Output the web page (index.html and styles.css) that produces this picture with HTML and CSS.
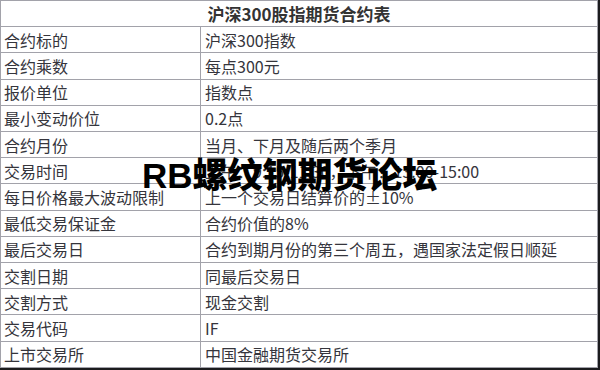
FILE: index.html
```html
<!DOCTYPE html>
<html>
	<head>
		<meta charset="utf-8">
		<title>沪深300股指期货合约表</title>
		<link rel="stylesheet" href="styles.css">
	</head>
	<body>
		<div class="frame">
			<table class="contract">
				<tr><th colspan="2">沪深300股指期货合约表</th></tr>
				<tr><td class="name">合约标的</td><td>沪深300指数</td></tr>
				<tr><td class="name">合约乘数</td><td>每点300元</td></tr>
				<tr><td class="name">报价单位</td><td>指数点</td></tr>
				<tr><td class="name">最小变动价位</td><td>0.2点</td></tr>
				<tr><td class="name">合约月份</td><td>当月、下月及随后两个季月</td></tr>
				<tr><td class="name">交易时间</td><td>上午：9:15-11:30，下午：13:00-15:00</td></tr>
				<tr><td class="name">每日价格最大波动限制</td><td>上一个交易日结算价的±10%</td></tr>
				<tr><td class="name">最低交易保证金</td><td>合约价值的8%</td></tr>
				<tr><td class="name">最后交易日</td><td>合约到期月份的第三个周五，遇国家法定假日顺延</td></tr>
				<tr><td class="name">交割日期</td><td>同最后交易日</td></tr>
				<tr><td class="name">交割方式</td><td>现金交割</td></tr>
				<tr><td class="name">交易代码</td><td>IF</td></tr>
				<tr><td class="name">上市交易所</td><td>中国金融期货交易所</td></tr>
			</table>
			<!-- 水印 -->
			<div class="mark">RB螺纹钢期货论坛</div>
		</div>
	</body>
</html>
```

FILE: styles.css
```css
body {
	margin: 0;
	background-color: #fff;
}
.frame {
	position: relative;
	width: 598px;
	height: 368px;
	border-right: 2px solid #1c1c1e;
	border-bottom: 2px solid #1c1c1e;
	overflow: hidden;
}
.contract {
	width: 598px;
	height: 368px;
	border-collapse: collapse;
	font-family: "Noto Sans CJK SC", "Liberation Sans", sans-serif;
	font-size: 16px;
	color: #35353c;
}
.contract th,
.contract td {
	border: 1px solid #a2a2aa;
	padding: 0 4px;
	text-align: left;
	line-height: 20px;
	white-space: nowrap;
}
.contract th {
	text-align: center;
	font-size: 17px;
	font-weight: bold;
	color: #333;
}
.contract .name {
	width: 192px;
	padding-left: 3px;
}
.mark {
	position: absolute;
	left: 142px;
	top: 154px;
	font-family: "Liberation Sans", "Noto Sans CJK SC", sans-serif;
	font-size: 35px;
	font-weight: 900;
	line-height: 44px;
	color: #000;
}
```
